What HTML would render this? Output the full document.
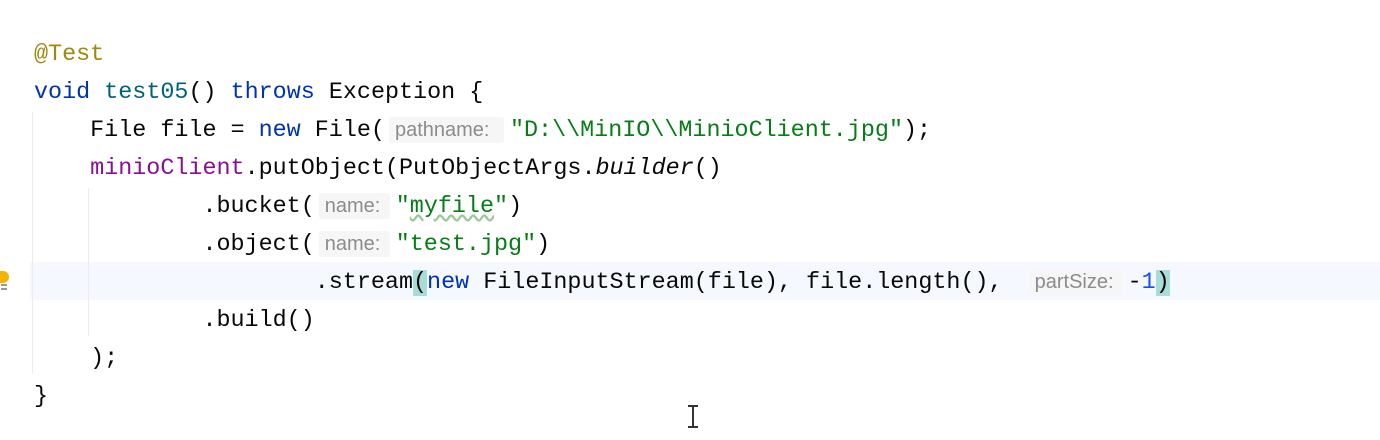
<!DOCTYPE html>
<html><head><meta charset="utf-8"><style>
html,body{margin:0;padding:0;background:#fff;width:1380px;height:440px;overflow:hidden;position:relative}
.l{position:absolute;left:34px;height:38px;line-height:38px;font-family:"Liberation Mono",monospace;font-size:23.4px;color:#080808;white-space:pre}
.k{color:#0033b3}.a{color:#9e880d}.m{color:#00627a}.s{color:#067d17}.f{color:#871094}.n{color:#1750eb}.i{font-style:italic}
.h{display:inline-block;font-family:"Liberation Sans",sans-serif;font-size:20px;color:#8c8c8c;background:#f6f6f6;border-radius:3px;line-height:26px;padding:0 0 0 6px;margin:0 6px 0 4px;box-sizing:border-box;white-space:nowrap}
.b{background:#a8dcd9}
.g{position:absolute;width:1px;background:#ececec}
</style></head><body>
<div style="position:absolute;left:30px;top:262px;width:1350px;height:38px;background:#f5f8fe"></div>
<div class="g" style="left:32px;top:112px;height:262px"></div>
<div class="g" style="left:88px;top:188px;height:148px"></div>
<div class="l" style="top:36px"><span class="a">@Test</span></div>
<div class="l" style="top:74px"><span class="k">void</span> <span class="m">test05</span>() <span class="k">throws</span> Exception {</div>
<div class="l" style="top:112px">    File file = <span class="k">new</span> File(<span class="h" style="width:115px">pathname:</span><span class="s">"D:\\MinIO\\MinioClient.jpg"</span>);</div>
<div class="l" style="top:150px">    <span class="f">minioClient</span>.putObject(PutObjectArgs.<span class="i">builder</span>()</div>
<div class="l" style="top:188px">            .bucket(<span class="h" style="width:71px">name:</span><span class="s">"<span style="text-decoration:underline wavy #9cc79c">myfile</span>"</span>)</div>
<div class="l" style="top:226px">            .object(<span class="h" style="width:71px">name:</span><span class="s">"test.jpg"</span>)</div>
<div class="l" style="top:264px">                    .stream<span class="b">(</span><span class="k">new</span> FileInputStream(file), file.length(), <span class="h" style="width:93px;margin-left:12px">partSize:</span>-<span class="n">1</span><span class="b">)</span></div>
<div class="l" style="top:302px">            .build()</div>
<div class="l" style="top:340px">    );</div>
<div class="l" style="top:378px">}</div>
<div style="position:absolute;left:0;top:271px;width:9px;height:12px;background:#f4b400;border-radius:0 6px 6px 0"></div>
<div style="position:absolute;left:1px;top:284px;width:6px;height:2px;background:#999"></div>
<div style="position:absolute;left:1px;top:288px;width:6px;height:2px;background:#999"></div>
<div style="position:absolute;left:692px;top:405px;width:2px;height:23px;background:#333"></div>
<div style="position:absolute;left:688px;top:405px;width:10px;height:2px;background:#333"></div>
<div style="position:absolute;left:688px;top:426px;width:10px;height:2px;background:#333"></div>
</body></html>
